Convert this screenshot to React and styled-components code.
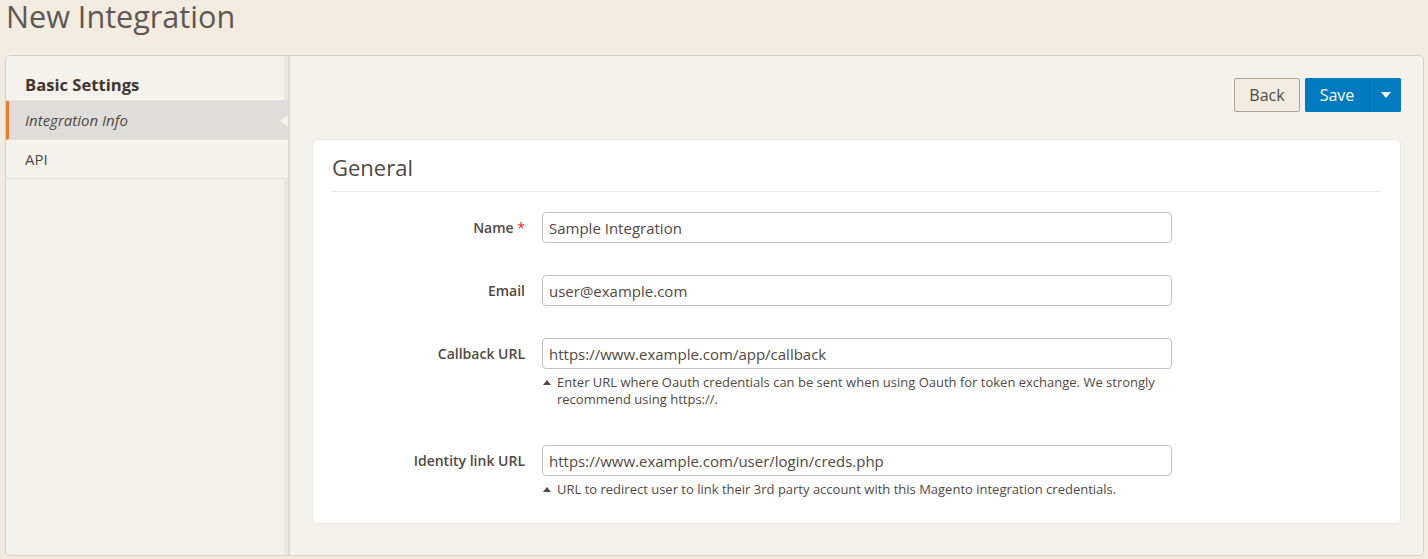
import React from "react";
import styled, { createGlobalStyle } from "styled-components";

const GlobalStyle = createGlobalStyle`
  body {
    margin: 0;
    font-family: "Open Sans", "Liberation Sans", sans-serif;
    background: #f2ebe0;
  }
`;

const fields = [
  { label: "Name", required: true, value: "Sample Integration" },
  { label: "Email", value: "user@example.com" },
  {
    label: "Callback URL",
    value: "https://www.example.com/app/callback",
    note: "Enter URL where Oauth credentials can be sent when using Oauth for token exchange. We strongly recommend using https://.",
  },
  {
    label: "Identity link URL",
    value: "https://www.example.com/user/login/creds.php",
    note: "URL to redirect user to link their 3rd party account with this Magento integration credentials.",
  },
];

const App = () => {
  return (
    <Page>
      <GlobalStyle />
      <Title>New Integration</Title>
      <Panel>
        <Sidebar>
          <SideTitle>Basic Settings</SideTitle>
          <NavItem $active>Integration Info</NavItem>
          <NavItem>API</NavItem>
        </Sidebar>
        <Content>
          <Actions>
            <BackButton>Back</BackButton>
            <SplitButton>
              <SaveButton>Save</SaveButton>
              <ToggleButton aria-label="More">
                <Caret />
              </ToggleButton>
            </SplitButton>
          </Actions>
          <Card>
            <CardTitle>General</CardTitle>
            <Form>
              {fields.map((f) => (
                <Field key={f.label}>
                  <Label>
                    {f.label}
                    {f.required && <Req> *</Req>}
                  </Label>
                  <Control>
                    <Input defaultValue={f.value} readOnly />
                    {f.note && (
                      <Note>
                        <NoteArrow />
                        <span>{f.note}</span>
                      </Note>
                    )}
                  </Control>
                </Field>
              ))}
            </Form>
          </Card>
        </Content>
      </Panel>
    </Page>
  );
};

export default App;

const Page = styled.div`
  min-height: 559px;
  box-sizing: border-box;
  padding: 0 4px 3px 5px;
  background: #f2ebe0;
`;

const Title = styled.h1`
  margin: 0 0 25px 1px;
  padding-top: 1px;
  height: 30px;
  box-sizing: border-box;
  font-size: 30.6px;
  line-height: 30px;
  font-weight: 400;
  color: #5e5752;
`;

const Panel = styled.div`
  display: flex;
  height: 501px;
  box-sizing: border-box;
  border: 1px solid #d6d0c7;
  border-radius: 5px;
  background: #f5f2ed;
  overflow: hidden;
`;

const Sidebar = styled.div`
  width: 282px;
  flex-shrink: 0;
  border-right: 2px solid #dedad4;
  background: linear-gradient(to right, #f5f2ed 278px, #ebe7e1 278px);
`;

const SideTitle = styled.div`
  padding: 18px 0 0 19px;
  height: 45px;
  box-sizing: border-box;
  font-size: 16.6px;
  font-weight: 700;
  line-height: 22px;
  color: #41362f;
  border-bottom: 1px solid #e6e2dc;
`;

const NavItem = styled.div`
  position: relative;
  height: 39px;
  box-sizing: border-box;
  padding-left: ${(p) => (p.$active ? "16px" : "19px")};
  border-left: ${(p) => (p.$active ? "3px solid #eb7b2c" : "none")};
  border-bottom: 1px solid #e3dfd9;
  background: ${(p) => (p.$active ? "#dfddd9" : "#f5f2ed")};
  font-size: 15px;
  font-style: ${(p) => (p.$active ? "italic" : "normal")};
  line-height: 38px;
  color: #514943;

  &::after {
    content: "";
    display: ${(p) => (p.$active ? "block" : "none")};
    position: absolute;
    right: 0;
    top: 14px;
    border-top: 6px solid transparent;
    border-bottom: 6px solid transparent;
    border-right: 8px solid #f5f2ed;
  }
`;

const Content = styled.div`
  flex: 1;
  padding: 22px 22px 0 22px;
`;

const Actions = styled.div`
  display: flex;
  justify-content: flex-end;
  gap: 5px;
  margin-bottom: 27px;
`;

const BackButton = styled.button`
  width: 66px;
  height: 34px;
  border: 1px solid #ada393;
  border-radius: 2px;
  background: #f1ebe1;
  color: #514943;
  font-family: inherit;
  font-size: 16px;
  padding: 0;
`;

const SplitButton = styled.div`
  display: flex;
  height: 34px;
  border-radius: 2px;
  overflow: hidden;
  background: #007bc2;
`;

const SaveButton = styled.button`
  width: 65px;
  border: none;
  border-right: 1px solid #00649f;
  background: #007bc2;
  color: #fff;
  font-family: inherit;
  font-size: 16px;
  padding: 0;
`;

const ToggleButton = styled.button`
  width: 31px;
  border: none;
  background: #007bc2;
  display: flex;
  align-items: center;
  justify-content: center;
  padding: 0;
`;

const Caret = styled.span`
  border-left: 5px solid transparent;
  border-right: 5px solid transparent;
  border-top: 6px solid #fff;
`;

const Card = styled.div`
  background: #fff;
  border: 1px solid #ebe7e1;
  border-radius: 5px;
  padding: 0 19px 20px 19px;
`;

const CardTitle = styled.div`
  height: 52px;
  box-sizing: border-box;
  padding-top: 12px;
  font-size: 22px;
  line-height: 30px;
  color: #514943;
  border-bottom: 1px solid #e8e8e8;
`;

const Form = styled.div`
  padding-top: 20px;
`;

const Field = styled.div`
  display: grid;
  grid-template-columns: 193px 630px;
  column-gap: 17px;
  margin-bottom: 32px;

  &:last-child {
    margin-bottom: 0;
  }
`;

const Label = styled.label`
  text-align: right;
  font-size: 14px;
  font-weight: 600;
  line-height: 31px;
  color: #514943;
`;

const Req = styled.span`
  color: #e22626;
  font-weight: 400;
`;

const Control = styled.div`
  display: flex;
  flex-direction: column;
`;

const Input = styled.input`
  height: 31px;
  box-sizing: border-box;
  border: 1px solid #c2c2c2;
  border-radius: 4px;
  padding: 0 6px;
  font-family: inherit;
  font-size: 15px;
  color: #514943;
  background: #fff;
  outline: none;
`;

const Note = styled.div`
  display: flex;
  gap: 6px;
  margin: 5px 0 5px 0;
  font-size: 13px;
  line-height: 17px;
  color: #514943;
`;

const NoteArrow = styled.i`
  flex-shrink: 0;
  margin: 6px 0 0 1px;
  width: 0;
  height: 0;
  border-left: 4.5px solid transparent;
  border-right: 4.5px solid transparent;
  border-bottom: 5px solid #514943;
`;
